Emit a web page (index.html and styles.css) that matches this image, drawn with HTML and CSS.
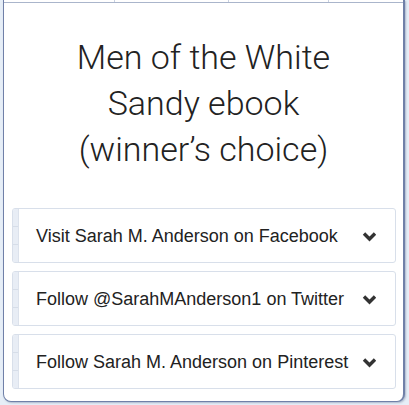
FILE: index.html
```html
<!DOCTYPE html>
<html>
<head>
<meta charset="utf-8">
<link rel="stylesheet" href="styles.css">
</head>
<body>
<div class="card">
  <div class="toprow">
    <div class="cell c1"></div>
    <div class="cell c2"></div>
    <div class="cell c3"></div>
    <div class="cell c4"></div>
  </div>
  <h1 class="title">Men of the White Sandy ebook (winner’s choice)</h1>
  <div class="entries">
    <div class="entry">
      <div class="strip"><span></span><span></span><span></span></div>
      <div class="label">Visit Sarah M. Anderson on Facebook</div>
      <svg class="chev" width="15" height="11" viewBox="0 0 15 11"><polyline points="2,2.5 7.5,8 13,2.5" fill="none" stroke="#333" stroke-width="3.4"/></svg>
    </div>
    <div class="entry">
      <div class="strip"><span></span><span></span><span></span></div>
      <div class="label">Follow @SarahMAnderson1 on Twitter</div>
      <svg class="chev" width="15" height="11" viewBox="0 0 15 11"><polyline points="2,2.5 7.5,8 13,2.5" fill="none" stroke="#333" stroke-width="3.4"/></svg>
    </div>
    <div class="entry">
      <div class="strip"><span></span><span></span><span></span></div>
      <div class="label">Follow Sarah M. Anderson on Pinterest</div>
      <svg class="chev" width="15" height="11" viewBox="0 0 15 11"><polyline points="2,2.5 7.5,8 13,2.5" fill="none" stroke="#333" stroke-width="3.4"/></svg>
    </div>
  </div>
</div>
</body>
</html>
```
FILE: styles.css
```css
html, body {
  margin: 0;
  padding: 0;
  background: #e6eef7;
}
body {
  width: 409px;
  height: 405px;
  overflow: hidden;
}
.card {
  margin-left: 3px;
  width: 399px;
  height: 401px;
  box-sizing: content-box;
  background: #fff;
  border: 1px solid #7080a8;
  border-right-width: 2px;
  border-top: none;
  border-radius: 0 0 8px 8px;
  box-shadow: 1px 1px 2px rgba(60, 80, 120, 0.35);
  display: flex;
  flex-direction: column;
}
.toprow {
  display: flex;
  height: 2px;
  border-bottom: 1px solid #aab5cb;
}
.cell {
  border-right: 1px solid #c9d1e1;
}
.c1 { width: 110px; }
.c2 { width: 113px; }
.c3 { width: 99px; }
.c4 { flex: 1; border-right: none; }
.title {
  margin: 31px 40px 0;
  font-family: Roboto, "Liberation Sans", sans-serif;
  font-weight: 300;
  font-size: 34px;
  line-height: 46px;
  text-align: center;
  color: #222;
}
.entries {
  margin: 36px 7px 0 8px;
  display: flex;
  flex-direction: column;
  gap: 8px;
}
.entry {
  height: 53px;
  border: 1px solid #d8dfea;
  border-radius: 3px;
  display: flex;
  align-items: center;
  overflow: hidden;
}
.strip {
  align-self: stretch;
  width: 5px;
  background: #e8edf5;
  border-right: 1px solid #dce2ec;
  display: flex;
  flex-direction: column;
}
.strip span {
  flex: 1;
  border-bottom: 1px solid #d6dde8;
}
.strip span:last-child { border-bottom: none; }
.label {
  flex: 1;
  margin-left: 17px;
  padding-top: 2px;
  font-family: "Liberation Sans", Arial, sans-serif;
  font-size: 18px;
  color: #222;
}
.chev {
  margin-right: 18px;
  margin-top: 1px;
}
```
